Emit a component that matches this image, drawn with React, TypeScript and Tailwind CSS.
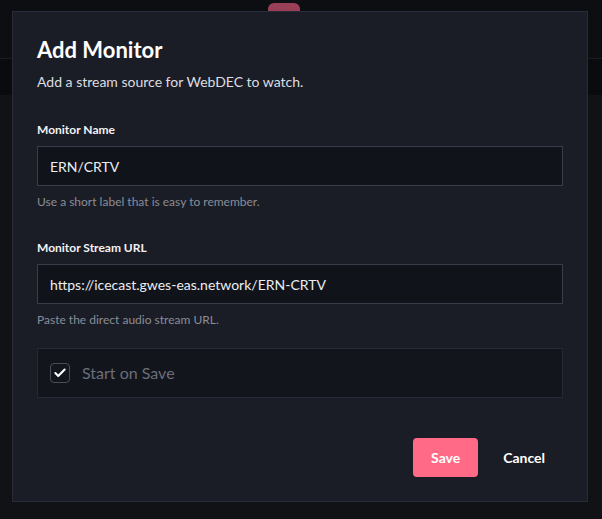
import { Check } from "lucide-react";

function Field({
  label,
  value,
  hint,
}: {
  label: string;
  value: string;
  hint: string;
}) {
  return (
    <div className="flex flex-col">
      <label className="text-[12px] font-bold leading-4 text-[#f2f2f4]">{label}</label>
      <div className="mt-2 flex h-10 items-center border border-[#3a3d49] bg-[#11131a] px-3 text-[14px] text-[#eceef2]">
        {value}
      </div>
      <p className="mt-2 text-[12px] leading-4 text-[#8a8d97]">{hint}</p>
    </div>
  );
}

export default function App() {
  return (
    <div
      className="relative h-[519px] w-[602px] overflow-hidden bg-[#0b0c10]"
      style={{ fontFamily: "Lato, 'Noto Sans', sans-serif" }}
    >
      {/* page behind the dialog */}
      <div className="flex h-[59px] border-b border-[#1a1c22] bg-[#0d0e12]">
        <div className="ml-[268px] mt-[3px] h-2 w-8 rounded-t-md bg-[#9a3f58]" />
      </div>
      <div className="h-[36px] bg-[#0a0b0e]" />
      <div className="h-full bg-[#111216]" />

      {/* dialog */}
      <div className="absolute left-[12px] top-[11px] flex h-[491px] w-[576px] flex-col border border-[#282b38] bg-[#1b1d26] px-[24px] pt-[24px] pb-[24px]">
        <h2 className="text-[22px] font-bold leading-7 text-white">Add Monitor</h2>
        <p className="mt-2 text-[14px] leading-5 text-[#dcdee3]">
          Add a stream source for WebDEC to watch.
        </p>

        <div className="mt-[30px] flex flex-col gap-[30px]">
          <Field label="Monitor Name" value="ERN/CRTV" hint="Use a short label that is easy to remember." />
          <Field
            label="Monitor Stream URL"
            value="https://icecast.gwes-eas.network/ERN-CRTV"
            hint="Paste the direct audio stream URL."
          />
        </div>

        <div className="mt-5 flex h-[50px] items-center gap-3 border border-[#262a35] bg-[#13151c] px-3">
          <span className="flex h-5 w-5 items-center justify-center rounded-[4px] border border-[#4a4d58] bg-[#14161d]">
            <Check className="h-[14px] w-[14px] text-white" strokeWidth={3.5} />
          </span>
          <span className="text-[16px] text-[#6b6e79]">Start on Save</span>
        </div>

        <div className="mt-auto flex items-center justify-end gap-[25px] pr-[18px]">
          <button className="h-[39px] w-[65px] rounded-[4px] bg-[#ff6b87] text-[14px] font-bold text-white">
            Save
          </button>
          <button className="text-[14px] font-bold text-white">Cancel</button>
        </div>
      </div>
    </div>
  );
}
